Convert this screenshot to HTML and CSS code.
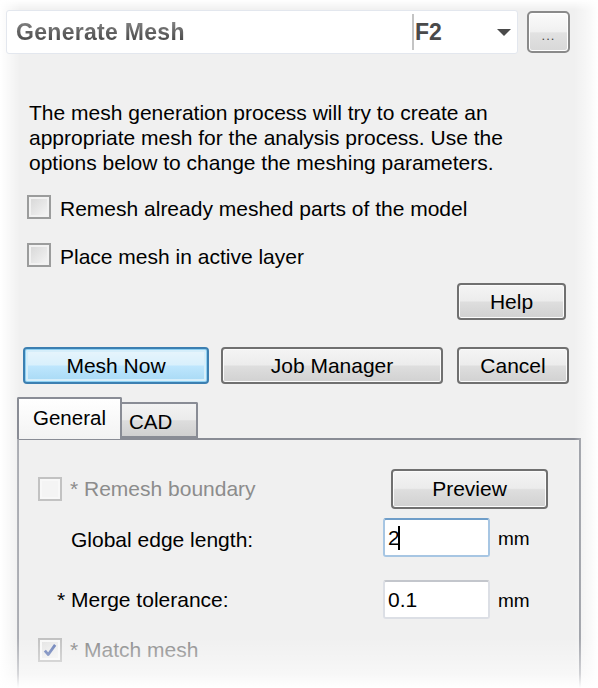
FILE: index.html
```html
<!DOCTYPE html>
<html>
<head>
<meta charset="utf-8">
<link rel="stylesheet" href="styles.css">
</head>
<body>
<div class="dialog">
  <div class="header">
    <div class="title-box">
      <span class="title">Generate Mesh</span>
      <span class="sep"></span>
      <span class="fkey">F2</span>
      <span class="arrow"></span>
    </div>
    <div class="more">...</div>
  </div>

  <p class="desc">The mesh generation process will try to create an<br>appropriate mesh for the analysis process. Use the<br>options below to change the meshing parameters.</p>

  <div class="check-row first"><span class="cb"></span><span class="cb-label">Remesh already meshed parts of the model</span></div>
  <div class="check-row second"><span class="cb"></span><span class="cb-label">Place mesh in active layer</span></div>

  <div class="help-row"><div class="btn help">Help</div></div>

  <div class="btn-row">
    <div class="btn default mesh-now">Mesh Now</div>
    <div class="btn job">Job Manager</div>
    <div class="btn cancel">Cancel</div>
  </div>

  <div class="tabs">
    <div class="tab active">General</div>
    <div class="tab inactive">CAD</div>
  </div>
  <div class="tab-panel">
    <div class="prow r1">
      <div class="pcell disabled"><span class="cb cb-disabled"></span><span class="plabel">* Remesh boundary</span></div>
      <div class="btn preview">Preview</div>
    </div>
    <div class="prow r2">
      <div class="pcell"><span class="plabel indent1">Global edge length:</span></div>
      <div class="input focus"><span>2</span><span class="caret"></span></div>
      <span class="unit">mm</span>
    </div>
    <div class="prow r3">
      <div class="pcell"><span class="plabel indent2">* Merge tolerance:</span></div>
      <div class="input"><span>0.1</span></div>
      <span class="unit">mm</span>
    </div>
    <div class="prow r4">
      <div class="pcell disabled"><span class="cb cb-disabled cb-checked"><svg viewBox="0 0 14 14" width="16" height="16"><path d="M2.5 7.5 L5.5 11 L11.5 2.5" fill="none" stroke="#6a7fb8" stroke-width="2.4" stroke-linejoin="round"/></svg></span><span class="plabel">* Match mesh</span></div>
    </div>
  </div>
</div>
</body>
</html>
```

FILE: styles.css
```css
html, body {
  margin: 0;
  padding: 0;
  background: #ffffff;
}

.dialog {
  position: relative;
  width: 598px;
  height: 688px;
  overflow: hidden;
  background: #f0f0f0;
  font-family: "Liberation Sans", Arial, sans-serif;
  color: #000;
}

.dialog::after {
  content: "";
  position: absolute;
  left: 0;
  top: 0;
  right: 0;
  bottom: 0;
  pointer-events: none;
  background:
    linear-gradient(to right, rgba(255,255,255,1) 0px, rgba(255,255,255,0) 20px),
    linear-gradient(to left, rgba(255,255,255,1) 0px, rgba(255,255,255,0.6) 8px, rgba(255,255,255,0) 24px),
    linear-gradient(to top, rgba(255,255,255,1) 0px, rgba(255,255,255,0.5) 14px, rgba(255,255,255,0) 50px),
    linear-gradient(to bottom, rgba(255,255,255,1) 0px, rgba(255,255,255,0) 10px);
}

/* header */
.header {
  display: flex;
  padding: 10px 0 0 6px;
  gap: 9px;
}

.title-box {
  position: relative;
  z-index: 1;
  box-sizing: border-box;
  width: 512px;
  height: 44px;
  background: #ffffff;
  border: 1px solid #e3e7ee;
  border-radius: 3px;
  display: flex;
  align-items: center;
}

.title {
  margin-left: 9px;
  font-weight: bold;
  font-size: 23px;
  letter-spacing: 0.3px;
  background: linear-gradient(#8a8a8a, #3a3a3a);
  -webkit-background-clip: text;
  background-clip: text;
  color: transparent;
  width: 386px;
}

.sep {
  width: 2px;
  height: 36px;
  background: #c4c4c4;
  margin-left: 10px;
}

.fkey {
  margin-left: 1px;
  font-weight: bold;
  font-size: 23px;
  color: #4a4a4a;
  width: 82px;
}

.arrow {
  width: 0;
  height: 0;
  border-left: 7px solid transparent;
  border-right: 7px solid transparent;
  border-top: 7px solid #4a4a4a;
}

.more {
  position: relative;
  z-index: 1;
  box-sizing: border-box;
  width: 43px;
  height: 42px;
  margin-top: 1px;
  border: 2px solid #8a8a8a;
  border-radius: 5px;
  background: linear-gradient(#fbfbfb 0%, #f0f0f0 50%, #e2e2e2 52%, #d8d8d8 100%);
  box-shadow: inset 0 0 0 1px #ffffff;
  font-size: 13px;
  color: #444;
  text-align: center;
  line-height: 46px;
  letter-spacing: 1px;
}

/* description */
.desc {
  margin: 46px 0 0 0;
  padding-left: 29px;
  font-size: 21px;
  line-height: 25px;
}

.check-row {
  display: flex;
  align-items: center;
  padding-left: 27px;
  height: 24px;
}
.check-row.first { margin-top: 20px; }
.check-row.second { margin-top: 24px; }

.cb {
  box-sizing: border-box;
  width: 24px;
  height: 24px;
  border: 2px solid #9b9c9c;
  background: linear-gradient(135deg, #d6d6d6 0%, #e9e9e9 60%, #f7f7f7 100%);
  box-shadow: inset 0 0 0 2px #f2f2f2;
  flex: none;
  display: flex;
  align-items: center;
  justify-content: center;
}

.cb-label {
  margin-left: 9px;
  font-size: 21px;
  padding-top: 3px;
}

/* buttons */
.btn {
  box-sizing: border-box;
  border: 2px solid #707070;
  border-radius: 4px;
  background: linear-gradient(#f4f4f4 0%, #ececec 48%, #dedede 52%, #d1d1d1 100%);
  box-shadow: inset 0 0 0 1px #fbfbfb;
  display: flex;
  align-items: center;
  justify-content: center;
  font-size: 21px;
  color: #000;
}

.help-row {
  display: flex;
  padding-left: 457px;
  margin-top: 16px;
}
.help {
  width: 109px;
  height: 37px;
}

.btn-row {
  display: flex;
  padding-left: 23px;
  margin-top: 27px;
  height: 37px;
}
.mesh-now { width: 186px; }
.job { width: 222px; margin-left: 12px; }
.cancel { width: 112px; margin-left: 14px; }

.btn.default {
  border-color: #3c7fb1;
  background: linear-gradient(#e8f5fc 0%, #d9f0fc 48%, #bee6fd 52%, #a7d9f5 100%);
  box-shadow: inset 0 0 0 1px #8ed0f2, inset 0 0 0 3px #d6eefa;
}

/* tabs */
.tabs {
  display: flex;
  align-items: flex-end;
  padding-left: 17px;
  margin-top: 13px;
  height: 41px;
  position: relative;
  z-index: 2;
}

.tab {
  box-sizing: border-box;
  font-size: 20.5px;
  display: flex;
  align-items: center;
}

.tab.active {
  width: 105px;
  height: 42px;
  margin-bottom: -1px;
  border: 2px solid #898c95;
  border-bottom: none;
  border-radius: 2px 2px 0 0;
  background: linear-gradient(#ffffff, #f3f3f3);
  padding-left: 14px;
  padding-bottom: 2px;
}

.tab.inactive {
  width: 76px;
  height: 36px;
  border: 2px solid #898c95;
  border-left: none;
  border-radius: 0 2px 0 0;
  background: linear-gradient(#f3f3f3 0%, #ebebeb 50%, #dddddd 52%, #d0d0d0 100%);
  padding-left: 7px;
  padding-top: 3px;
}

.tab-panel {
  box-sizing: border-box;
  margin-left: 17px;
  width: 564px;
  height: 260px;
  border: 2px solid #898c95;
  border-left-color: #a4a6ad;
  border-bottom: none;
  background: #f0f0f0;
  padding: 29px 0 0 19px;
  display: flex;
  flex-direction: column;
}

.prow {
  display: flex;
  align-items: center;
}
.pcell {
  width: 345px;
  display: flex;
  align-items: center;
  font-size: 21px;
}
.pcell.disabled { color: #8c8c8c; }

.plabel { margin-left: 8px; }
.indent1 { margin-left: 33px; padding-top: 4px; }
.indent2 { margin-left: 19px; }

.r1 { height: 40px; }
.preview { width: 157px; height: 40px; margin-left: 8px; }

.r2 { margin-top: 9px; height: 39px; }
.r3 { margin-top: 23px; height: 39px; }
.r4 { margin-top: 18px; height: 26px; }

.cb-disabled {
  border-color: #c2c2c2;
  background: #f4f4f4;
  box-shadow: inset 0 0 0 2px #f8f8f8;
}
.cb-checked {
  background: linear-gradient(135deg, #e2e2e2, #f6f6f6);
}

.input {
  box-sizing: border-box;
  width: 107px;
  height: 39px;
  background: #ffffff;
  border: 2px solid #dcdfe5;
  border-top-color: #c3c6cc;
  border-radius: 3px;
  display: flex;
  align-items: center;
  padding-left: 3px;
  font-size: 21px;
}
.input.focus {
  border-color: #a7c6e3;
  border-top-color: #6f9ec9;
}
.caret {
  width: 2px;
  height: 24px;
  background: #000;
  margin-left: -2px;
}

.unit {
  margin-left: 8px;
  font-size: 19px;
  padding-top: 2px;
}
```
